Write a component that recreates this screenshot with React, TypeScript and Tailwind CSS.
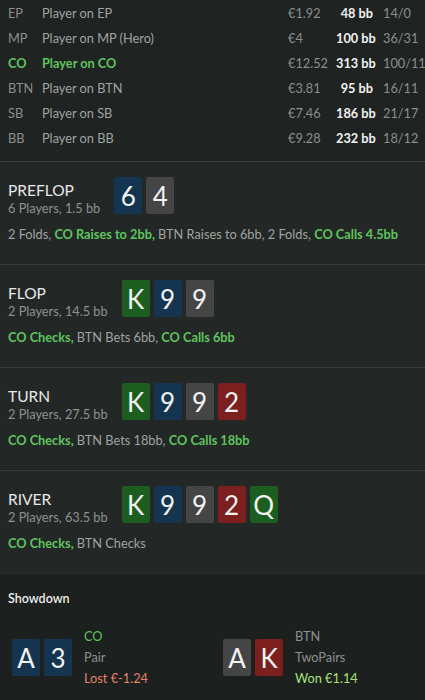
import React from 'react';

type Suit = 'c' | 'd' | 's' | 'h';

const players = [
  { pos: 'EP', name: 'Player on EP', money: '€1.92', bb: '48 bb', stats: '14/0' },
  { pos: 'MP', name: 'Player on MP (Hero)', money: '€4', bb: '100 bb', stats: '36/31' },
  { pos: 'CO', name: 'Player on CO', money: '€12.52', bb: '313 bb', stats: '100/11', active: true },
  { pos: 'BTN', name: 'Player on BTN', money: '€3.81', bb: '95 bb', stats: '16/11' },
  { pos: 'SB', name: 'Player on SB', money: '€7.46', bb: '186 bb', stats: '21/17' },
  { pos: 'BB', name: 'Player on BB', money: '€9.28', bb: '232 bb', stats: '18/12' },
];

const suitBg: Record<Suit, string> = {
  c: 'bg-[#1b5e1f]',
  d: 'bg-[#15344f]',
  s: 'bg-[#454545]',
  h: 'bg-[#7b1f1f]',
};

const Card = ({ rank, suit }: { rank: string; suit: Suit }) => (
  <div
    className={`w-[28px] h-[37px] rounded-[2px] flex items-center justify-center text-[26px] leading-none text-[#f2f2f2] ${suitBg[suit]}`}
  >
    {rank}
  </div>
);

type Action = { text: string; hero?: boolean };

const streets: { title: string; sub: string; cards: [string, Suit][]; actions: Action[] }[] = [
  {
    title: 'PREFLOP',
    sub: '6 Players, 1.5 bb',
    cards: [['6', 'd'], ['4', 's']],
    actions: [
      { text: '2 Folds,' },
      { text: 'CO Raises to 2bb,', hero: true },
      { text: 'BTN Raises to 6bb,' },
      { text: '2 Folds,' },
      { text: 'CO Calls 4.5bb', hero: true },
    ],
  },
  {
    title: 'FLOP',
    sub: '2 Players, 14.5 bb',
    cards: [['K', 'c'], ['9', 'd'], ['9', 's']],
    actions: [
      { text: 'CO Checks,', hero: true },
      { text: 'BTN Bets 6bb,' },
      { text: 'CO Calls 6bb', hero: true },
    ],
  },
  {
    title: 'TURN',
    sub: '2 Players, 27.5 bb',
    cards: [['K', 'c'], ['9', 'd'], ['9', 's'], ['2', 'h']],
    actions: [
      { text: 'CO Checks,', hero: true },
      { text: 'BTN Bets 18bb,' },
      { text: 'CO Calls 18bb', hero: true },
    ],
  },
  {
    title: 'RIVER',
    sub: '2 Players, 63.5 bb',
    cards: [['K', 'c'], ['9', 'd'], ['9', 's'], ['2', 'h'], ['Q', 'c']],
    actions: [
      { text: 'CO Checks,', hero: true },
      { text: 'BTN Checks' },
    ],
  },
];

export default function App() {
  return (
    <div
      className="w-[425px] h-[700px] overflow-hidden bg-[#1c201e] text-[12.75px]"
      style={{ fontFamily: 'Lato, "Open Sans", sans-serif' }}
    >
      {/* SPILLERE */}
      <div className="bg-[#1f2321] pt-[1px] pb-[10px]">
        {players.map(p => (
          <div key={p.pos} className="flex items-center h-[25px] pl-[8px] whitespace-nowrap">
            <div className={`w-[34px] ${p.active ? 'text-[#5fc45f] font-bold' : 'text-[#8c8f8e]'}`}>{p.pos}</div>
            <div className={`flex-1 ${p.active ? 'text-[#5fc45f] font-bold' : 'text-[#a0a3a2]'}`}>{p.name}</div>
            <div className="w-[48px] text-[#8c8f8e]">{p.money}</div>
            <div className="w-[37px] text-right font-bold text-[#f2f2f2]">{p.bb}</div>
            <div className="w-[42px] ml-[10px] text-[#8c8f8e]">{p.stats}</div>
          </div>
        ))}
      </div>

      {/* GATER */}
      {streets.map(s => (
        <div key={s.title} className="border-t border-[#3b3e3d] bg-[#232826] px-[8px] pt-[15px] pb-[21px]">
          <div className="flex items-start">
            <div className="mt-[3px] whitespace-nowrap">
              <div className="text-[15.5px] leading-[20px] text-[#e8e8e8]">{s.title}</div>
              <div className="leading-[17px] text-[#8e9190]">{s.sub}</div>
            </div>
            <div className="flex gap-[4px] ml-[14px]">
              {s.cards.map(([r, su], i) => (
                <Card key={i} rank={r} suit={su} />
              ))}
            </div>
          </div>
          <div className="mt-[9px] leading-[17px] text-[#a0a3a2] whitespace-nowrap">
            {s.actions.map((a, i) => (
              <span key={i} className={a.hero ? 'text-[#5fc45f] font-bold' : ''}>
                {a.text}
                {i < s.actions.length - 1 ? ' ' : ''}
              </span>
            ))}
          </div>
        </div>
      ))}

      {/* SHOWDOWN */}
      <div className="border-t border-[#262a28] bg-[#1c201e] pt-[16px]">
        <div className="px-[8px] text-[12.5px] leading-[17px] font-semibold text-[#ececec]">Showdown</div>
        <div className="flex items-center pl-[12px] mt-[19px]">
          <div className="w-[211px] flex items-center">
            <div className="flex gap-[4px]">
              <Card rank="A" suit="d" />
              <Card rank="3" suit="d" />
            </div>
            <div className="ml-[12px] leading-[21px]">
              <div className="text-[#5fc45f]">CO</div>
              <div className="text-[#8e9190]">Pair</div>
              <div className="text-[#e5806f]">Lost €-1.24</div>
            </div>
          </div>
          <div className="flex items-center">
            <div className="flex gap-[4px]">
              <Card rank="A" suit="s" />
              <Card rank="K" suit="h" />
            </div>
            <div className="ml-[12px] leading-[21px]">
              <div className="text-[#8e9190]">BTN</div>
              <div className="text-[#8e9190]">TwoPairs</div>
              <div className="text-[#a8e07a]">Won €1.14</div>
            </div>
          </div>
        </div>
      </div>
    </div>
  );
}
